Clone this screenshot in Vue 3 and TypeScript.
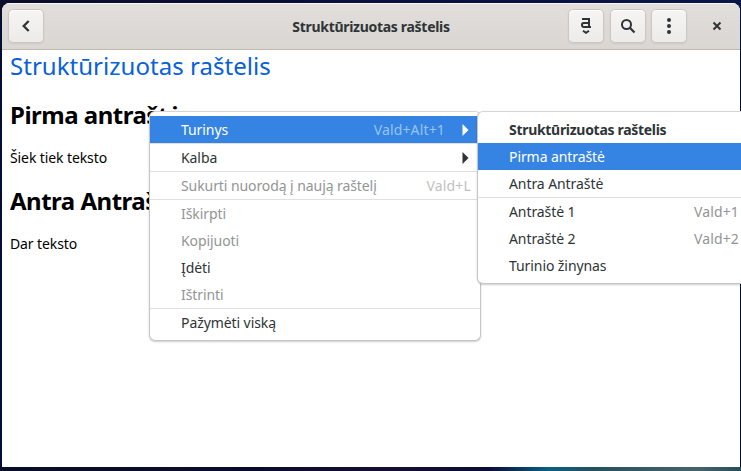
<script setup lang="ts">
interface MenuItem {
  label: string
  shortcut?: string
  disabled?: boolean
  active?: boolean
  bold?: boolean
  submenu?: boolean
}

const title = 'Struktūrizuotas raštelis'

const contextMenu: MenuItem[][] = [
  [{ label: 'Turinys', shortcut: 'Vald+Alt+1', submenu: true, active: true }],
  [{ label: 'Kalba', submenu: true }],
  [{ label: 'Sukurti nuorodą į naują raštelį', shortcut: 'Vald+L', disabled: true }],
  [
    { label: 'Iškirpti', disabled: true },
    { label: 'Kopijuoti', disabled: true },
    { label: 'Įdėti' },
    { label: 'Ištrinti', disabled: true },
  ],
  [{ label: 'Pažymėti viską' }],
]

const contentsMenu: MenuItem[][] = [
  [
    { label: title, bold: true },
    { label: 'Pirma antraštė', active: true },
    { label: 'Antra Antraštė' },
  ],
  [
    { label: 'Antraštė 1', shortcut: 'Vald+1' },
    { label: 'Antraštė 2', shortcut: 'Vald+2' },
    { label: 'Turinio žinynas' },
  ],
]

const menus = [
  { name: 'context', groups: contextMenu },
  { name: 'contents', groups: contentsMenu },
]
</script>

<template>
  <div class="desktop">
    <main class="window">
      <header class="bar">
        <button class="btn" aria-label="Atgal">
          <svg width="16" height="16" viewBox="0 0 16 16"><path d="M10.7 3 5.7 8l5 5" fill="none" stroke="#2e3436" stroke-width="2.3" /></svg>
        </button>
        <h1 class="title">{{ title }}</h1>
        <div class="actions">
          <button class="btn" aria-label="Tekstas">
            <svg width="16" height="16" viewBox="0 0 16 16" fill="none" stroke="#2e3436" stroke-width="2"><path d="M4 1h7v8H5.7A1.7 1.7 0 0 1 4 7.3V6.7A1.7 1.7 0 0 1 5.7 5H11M11 9h2M5 12.7l3 2.1 3-2.1" /></svg>
          </button>
          <button class="btn search" aria-label="Ieškoti">
            <svg width="16" height="16" viewBox="0 0 16 16" fill="none" stroke="#2e3436" stroke-width="2"><circle cx="6.5" cy="6.5" r="4.5" /><path d="m9.8 9.8 4.7 4.7" stroke-width="2.2" /></svg>
          </button>
          <button class="btn" aria-label="Meniu">
            <svg width="16" height="16" viewBox="0 0 16 16" fill="#2e3436"><circle cx="8" cy="2" r="2" /><circle cx="8" cy="8" r="2" /><circle cx="8" cy="14" r="2" /></svg>
          </button>
          <button class="close" aria-label="Užverti">
            <svg width="16" height="16" viewBox="0 0 16 16"><path d="m4.5 4.5 7 7m0-7-7 7" stroke="#2e3436" stroke-width="2" /></svg>
          </button>
        </div>
      </header>
      <article class="note">
        <h2 class="note-title">{{ title }}</h2>
        <h3>Pirma antraštė</h3>
        <p>Šiek tiek teksto</p>
        <h3>Antra Antraštė</h3>
        <p>Dar teksto</p>
      </article>
    </main>

    <nav v-for="menu in menus" :key="menu.name" class="menu" :class="menu.name">
      <ul v-for="(group, g) in menu.groups" :key="g" class="group">
        <li
          v-for="item in group"
          :key="item.label"
          class="item"
          :class="{ active: item.active, disabled: item.disabled, bold: item.bold }"
        >
          <span class="label">{{ item.label }}</span>
          <span v-if="item.shortcut" class="shortcut">{{ item.shortcut }}</span>
          <svg v-if="item.submenu" class="arrow" width="7" height="12" viewBox="0 0 7 12"><path d="M0.5 0v12L6.5 6z" fill="currentColor" /></svg>
        </li>
      </ul>
    </nav>
  </div>
</template>

<style>
body {
  margin: 0;
  overflow: hidden;
}
</style>

<style scoped>
.desktop {
  position: relative;
  box-sizing: border-box;
  width: 741px;
  height: 471px;
  padding: 3px 1px 4px 2px;
  overflow: hidden;
  font-family: "Noto Sans", "Open Sans", sans-serif;
  font-size: 14px;
  color: #2e3436;
  background:
    linear-gradient(90deg, #080d27 0%, #0a0b2b 35%, #160e30 52%, #0a0d37 66%, #0b5e84 74%, #25505d 80%, #46636a 94%, #274d59 100%) 0 467px / 100% 4px no-repeat,
    linear-gradient(90deg, #0b0d29, #0b0e3c 50%, #09164a) 0 0 / 100% 20px no-repeat,
    #040d34;
}

.window {
  height: 464px;
  overflow: hidden;
  background: #fff;
  border-radius: 8px 8px 0 0;
}

.bar {
  display: grid;
  grid-template-columns: 1fr auto 1fr;
  align-items: center;
  box-sizing: border-box;
  height: 47px;
  padding: 0 6px;
  background: linear-gradient(#e1dedb, #dad6d2);
  border-bottom: 1px solid #bfb8b1;
  box-shadow: inset 0 1px #f9f8f8;
}

.btn,
.close {
  display: flex;
  align-items: center;
  justify-content: center;
  box-sizing: border-box;
  width: 36px;
  height: 34px;
  padding: 0;
  border: 1px solid #cdc7c2;
  border-radius: 5px;
  background: linear-gradient(#f6f5f4, #edebe9);
  box-shadow: inset 0 1px #fff, 0 1px 2px #00000012;
}

.search {
  margin: 0 5px 0 6px;
}

.close {
  width: 34px;
  margin-left: 13px;
  border: 0;
  background: none;
  box-shadow: none;
}

.title {
  margin: 0;
  font-size: 14px;
  font-weight: 700;
  letter-spacing: -0.3px;
}

.actions {
  display: flex;
  justify-content: flex-end;
}

.note {
  padding: 0 8px;
  color: #000;
}

.note-title {
  margin: 0;
  font-size: 24px;
  font-weight: 400;
  line-height: 32px;
  letter-spacing: 0.03px;
  color: #0860dc;
}

h3 {
  margin: 0;
  padding-top: 15px;
  font-size: 24px;
  font-weight: 700;
  line-height: 36px;
  letter-spacing: -0.5px;
  white-space: nowrap;
}

.note p {
  margin: 0;
  padding-top: 14px;
  line-height: 21px;
  letter-spacing: -0.1px;
}

.menu {
  position: absolute;
  box-sizing: border-box;
  top: 111px;
  padding: 4px 0;
  background: #fff;
  border: 1px solid #c5c7c7;
  border-top-color: #d5d5d5;
  border-radius: 6px;
  box-shadow: 0 1px 2px #0003;
}

.context {
  left: 149px;
  width: 332px;
}

.contents {
  left: 477px;
  width: 272px;
}

.group {
  margin: 0;
  padding: 0;
  list-style: none;
}

.group + .group {
  border-top: 1px solid #e0e0e0;
}

.item {
  display: flex;
  align-items: center;
  height: 27px;
  padding: 0 9px 0 31px;
  letter-spacing: -0.08px;
  white-space: nowrap;
}

.active {
  color: #fff;
  background: #3584e4;
}

.disabled {
  color: #929595;
}

.bold {
  font-weight: 700;
  letter-spacing: -0.3px;
}

.shortcut {
  margin-left: auto;
  letter-spacing: 0.15px;
  color: #929595;
}

.active .shortcut {
  color: #9ac2f2;
}

.disabled .shortcut {
  color: #c0c2c2;
}

.arrow {
  margin-left: auto;
  margin-right: 2px;
}

.shortcut + .arrow {
  margin-left: 17px;
}
</style>
